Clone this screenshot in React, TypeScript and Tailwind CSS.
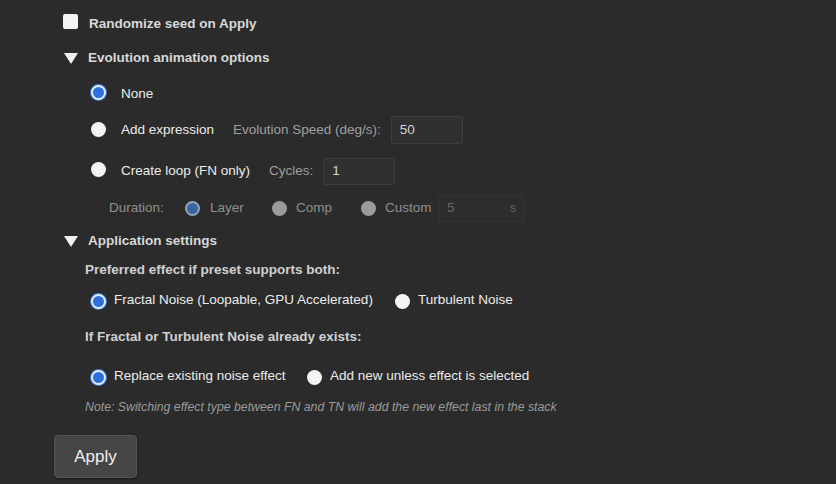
import React from "react";

const font = { fontFamily: '"Liberation Sans", Arial, Helvetica, sans-serif' };

function Radio({ state }: { state: "on" | "off" | "dimOn" | "dimOff" }) {
  if (state === "on")
    return (
      <span className="inline-block w-[15px] h-[15px] shrink-0 rounded-full border-[2.5px] border-[#e4ecf8] bg-[#2d6fe0] shadow-[0_0_0_1px_#3c7ce6]" />
    );
  if (state === "dimOn")
    return (
      <span className="inline-block w-[15px] h-[15px] shrink-0 rounded-full border-[2.5px] border-[#93a4bd] bg-[#3a64a4]" />
    );
  if (state === "dimOff")
    return <span className="inline-block w-[15px] h-[15px] shrink-0 rounded-full bg-[#9b9b9b]" />;
  return <span className="inline-block w-[15px] h-[15px] shrink-0 rounded-full bg-[#f4f4f4]" />;
}

function Triangle() {
  return (
    <svg width="14" height="11" viewBox="0 0 14 11" className="shrink-0">
      <polygon points="0,0 14,0 7,11" fill="#f2f2f2" />
    </svg>
  );
}

export default function App() {
  return (
    <div className="w-[836px] h-[484px] bg-[#2b2b2b] overflow-hidden text-[13.5px]" style={font}>
      <div className="flex flex-col">
        {/* Randomize */}
        <div className="h-[20px] mt-[14px] flex items-center pl-[63px]">
          <span className="w-[15px] h-[15px] bg-[#f4f4f4] rounded-[2px] mb-[5px] shrink-0" />
          <span className="ml-[11px] font-bold text-[#d8d8d8]">Randomize seed on Apply</span>
        </div>
        {/* Evolution header */}
        <div className="h-[20px] mt-[14px] flex items-center pl-[64px]">
          <Triangle />
          <span className="ml-[10px] font-bold text-[#d8d8d8]">Evolution animation options</span>
        </div>
        {/* None */}
        <div className="h-[20px] mt-[16px] flex items-center pl-[91px]">
          <span className="mb-[3px] flex"><Radio state="on" /></span>
          <span className="ml-[15px] text-[#ececec]">None</span>
        </div>
        {/* Add expression */}
        <div className="h-[20px] mt-[16px] flex items-center pl-[91px]">
          <span className="mb-[2px] flex"><Radio state="off" /></span>
          <span className="ml-[15px] text-[#ececec] w-[112px]">Add expression</span>
          <span className="text-[#9f9f9f]">Evolution Speed (deg/s):</span>
          <div className="ml-[10px] w-[72px] h-[28px] bg-[#303030] border border-[#3e3e3e] rounded-[3px] flex items-center pl-[8px] text-[#d4d4d4]">
            50
          </div>
        </div>
        {/* Create loop */}
        <div className="h-[20px] mt-[21px] flex items-center pl-[91px]">
          <span className="mb-[3px] flex"><Radio state="off" /></span>
          <span className="ml-[15px] text-[#ececec] w-[148px]">Create loop (FN only)</span>
          <span className="text-[#9f9f9f]">Cycles:</span>
          <div className="ml-[10px] w-[72px] h-[27px] bg-[#303030] border border-[#3e3e3e] rounded-[3px] flex items-center pl-[8px] text-[#d4d4d4]">
            1
          </div>
        </div>
        {/* Duration */}
        <div className="h-[20px] mt-[17px] flex items-center pl-[109px]">
          <span className="text-[#8f8f8f] w-[76px]">Duration:</span>
          <Radio state="dimOn" />
          <span className="ml-[10px] text-[#8f8f8f] w-[62px]">Layer</span>
          <Radio state="dimOff" />
          <span className="ml-[9px] text-[#8f8f8f] w-[65px]">Comp</span>
          <Radio state="dimOff" />
          <span className="ml-[9px] text-[#8f8f8f] w-[53px]">Custom</span>
          <div className="w-[87px] h-[27px] bg-[#2d2d2d] border border-[#343434] rounded-[3px] flex items-center justify-between px-[8px] text-[#666]">
            <span>5</span>
            <span className="text-[12px]">s</span>
          </div>
        </div>
        {/* Application settings */}
        <div className="h-[20px] mt-[13px] flex items-center pl-[64px]">
          <Triangle />
          <span className="ml-[10px] font-bold text-[#d8d8d8]">Application settings</span>
        </div>
        {/* Preferred */}
        <div className="h-[20px] mt-[9px] flex items-center pl-[85px]">
          <span className="font-bold text-[#d0d0d0]">Preferred effect if preset supports both:</span>
        </div>
        <div className="h-[20px] mt-[10px] flex items-center pl-[91px]">
          <span className="mt-[3px] flex"><Radio state="on" /></span>
          <span className="ml-[8px] text-[#ececec] w-[281px]">Fractal Noise (Loopable, GPU Accelerated)</span>
          <span className="mt-[3px] flex"><Radio state="off" /></span>
          <span className="ml-[8px] text-[#ececec]">Turbulent Noise</span>
        </div>
        {/* If Fractal */}
        <div className="h-[20px] mt-[17px] flex items-center pl-[85px]">
          <span className="font-bold text-[#d0d0d0]">If Fractal or Turbulent Noise already exists:</span>
        </div>
        <div className="h-[20px] mt-[19px] flex items-center pl-[91px]">
          <span className="mt-[2px] flex"><Radio state="on" /></span>
          <span className="ml-[8px] text-[#ececec] w-[193px]">Replace existing noise effect</span>
          <span className="mt-[2px] flex"><Radio state="off" /></span>
          <span className="ml-[8px] text-[#ececec]">Add new unless effect is selected</span>
        </div>
        {/* Note */}
        <div className="h-[20px] mt-[11px] flex items-center pl-[85px]">
          <span className="italic text-[12.3px] text-[#9a9a9a]">
            Note: Switching effect type between FN and TN will add the new effect last in the stack
          </span>
        </div>
        {/* Apply */}
        <div className="mt-[18px] pl-[54px]">
          <button className="w-[83px] h-[43px] bg-[#464646] border border-[#555555] rounded-[4px] shadow-[0_1px_2px_rgba(0,0,0,0.5)] text-[17px] text-[#f0f0f0] flex items-center justify-center" style={font}>
            Apply
          </button>
        </div>
      </div>
    </div>
  );
}
